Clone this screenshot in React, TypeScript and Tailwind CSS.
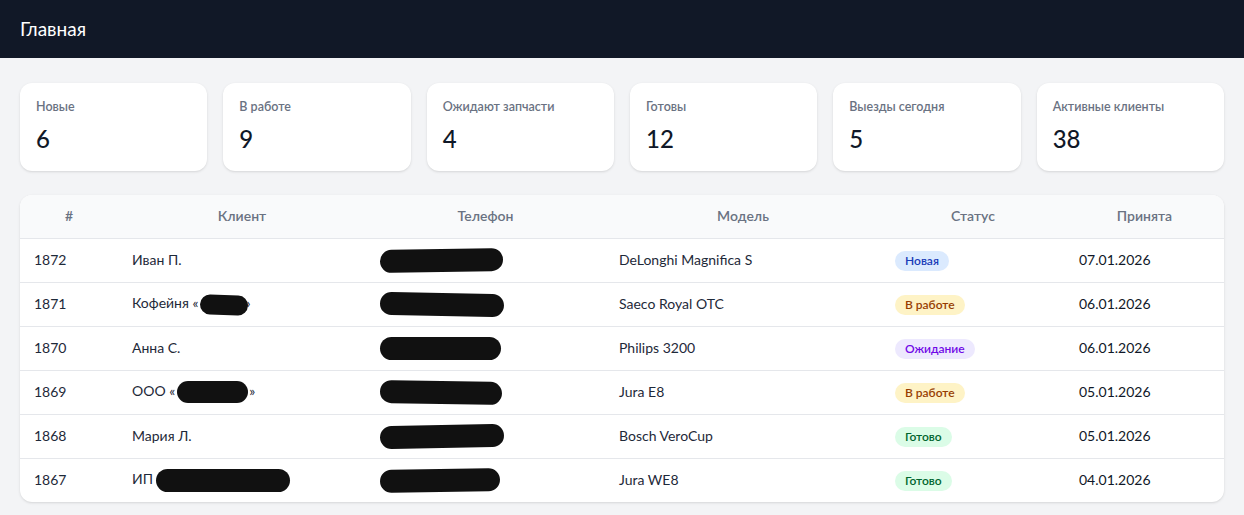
const stats = [
  { label: "Новые", value: "6" },
  { label: "В работе", value: "9" },
  { label: "Ожидают запчасти", value: "4" },
  { label: "Готовы", value: "12" },
  { label: "Выезды сегодня", value: "5" },
  { label: "Активные клиенты", value: "38" },
];

type Status = "new" | "work" | "wait" | "done";

const badge: Record<Status, { text: string; cls: string }> = {
  new: { text: "Новая", cls: "bg-blue-100 text-blue-800" },
  work: { text: "В работе", cls: "bg-amber-100 text-amber-800" },
  wait: { text: "Ожидание", cls: "bg-violet-100 text-violet-700" },
  done: { text: "Готово", cls: "bg-green-100 text-green-800" },
};

function Blot({ cls }: { cls: string }) {
  return <span className={`inline-block rounded-full bg-[#111111] align-middle ${cls}`} />;
}

// phone numbers are blacked out in the source, keep the marks
const orders = [
  { id: 1872, client: <>Иван П.</>, phone: "w-[123px] -rotate-1", model: "DeLonghi Magnifica S", status: "new" as Status, date: "07.01.2026" },
  {
    id: 1871,
    client: (
      <>
        Кофейня «<Blot cls="ml-[2px] -mr-[4px] h-[20px] w-[48px] rotate-2" />»
      </>
    ),
    phone: "w-[124px] rotate-1",
    model: "Saeco Royal OTC",
    status: "work" as Status,
    date: "06.01.2026",
  },
  { id: 1870, client: <>Анна С.</>, phone: "w-[121px]", model: "Philips 3200", status: "wait" as Status, date: "06.01.2026" },
  {
    id: 1869,
    client: (
      <>
        ООО «<Blot cls="ml-[2px] mr-[1px] h-[22px] w-[71px]" />»
      </>
    ),
    phone: "w-[122px] rotate-1",
    model: "Jura E8",
    status: "work" as Status,
    date: "05.01.2026",
  },
  { id: 1868, client: <>Мария Л.</>, phone: "w-[124px] -rotate-1", model: "Bosch VeroCup", status: "done" as Status, date: "05.01.2026" },
  {
    id: 1867,
    client: (
      <>
        ИП <Blot cls="-ml-[1px] h-[23px] w-[134px]" />
      </>
    ),
    phone: "w-[120px] -rotate-1",
    model: "Jura WE8",
    status: "done" as Status,
    date: "04.01.2026",
  },
];

export default function App() {
  return (
    <div className="min-h-screen bg-[#f3f4f6] font-['Lato','Noto_Sans',sans-serif] text-gray-900">
      <header className="flex h-[58px] items-center bg-[#111827] px-5">
        <h1 className="text-[19px] text-white">Главная</h1>
      </header>

      <main className="px-5 pt-[25px] pb-6">
        <div className="grid grid-cols-6 gap-4">
          {stats.map((s) => (
            <div key={s.label} className="rounded-xl bg-white p-4 shadow-sm">
              <div className="text-[12.5px] leading-4 font-semibold text-gray-500">{s.label}</div>
              <div className="mt-2 text-2xl font-medium text-gray-900">{s.value}</div>
            </div>
          ))}
        </div>

        <div className="mt-6 overflow-hidden rounded-xl bg-white shadow-sm">
          <table className="w-full table-fixed text-sm">
            <thead className="bg-gray-50">
              <tr className="h-[43px] border-b border-gray-200 text-gray-500">
                <th className="w-[98px] px-3.5 font-semibold">#</th>
                <th className="w-[248px] px-3.5 font-semibold">Клиент</th>
                <th className="w-[239px] px-3.5 font-semibold">Телефон</th>
                <th className="w-[276px] px-3.5 font-semibold">Модель</th>
                <th className="w-[184px] px-3.5 font-semibold">Статус</th>
                <th className="px-3.5 font-semibold">Принята</th>
              </tr>
            </thead>
            <tbody>
              {orders.map((o, i) => (
                <tr key={o.id} className={`h-[44px] ${i < orders.length - 1 ? "border-b border-gray-200" : ""}`}>
                  <td className="px-3.5 text-gray-800">{o.id}</td>
                  <td className="px-3.5 text-gray-800">{o.client}</td>
                  <td className="px-3.5">
                    <span className={`block h-[23px] rounded-full bg-[#111111] ${o.phone}`} />
                  </td>
                  <td className="px-3.5 text-gray-800">{o.model}</td>
                  <td className="px-3.5">
                    <span className={`inline-block rounded-full px-2.5 py-0.5 text-xs font-semibold ${badge[o.status].cls}`}>
                      {badge[o.status].text}
                    </span>
                  </td>
                  <td className="px-3.5 text-gray-900">{o.date}</td>
                </tr>
              ))}
            </tbody>
          </table>
        </div>
      </main>
    </div>
  );
}
